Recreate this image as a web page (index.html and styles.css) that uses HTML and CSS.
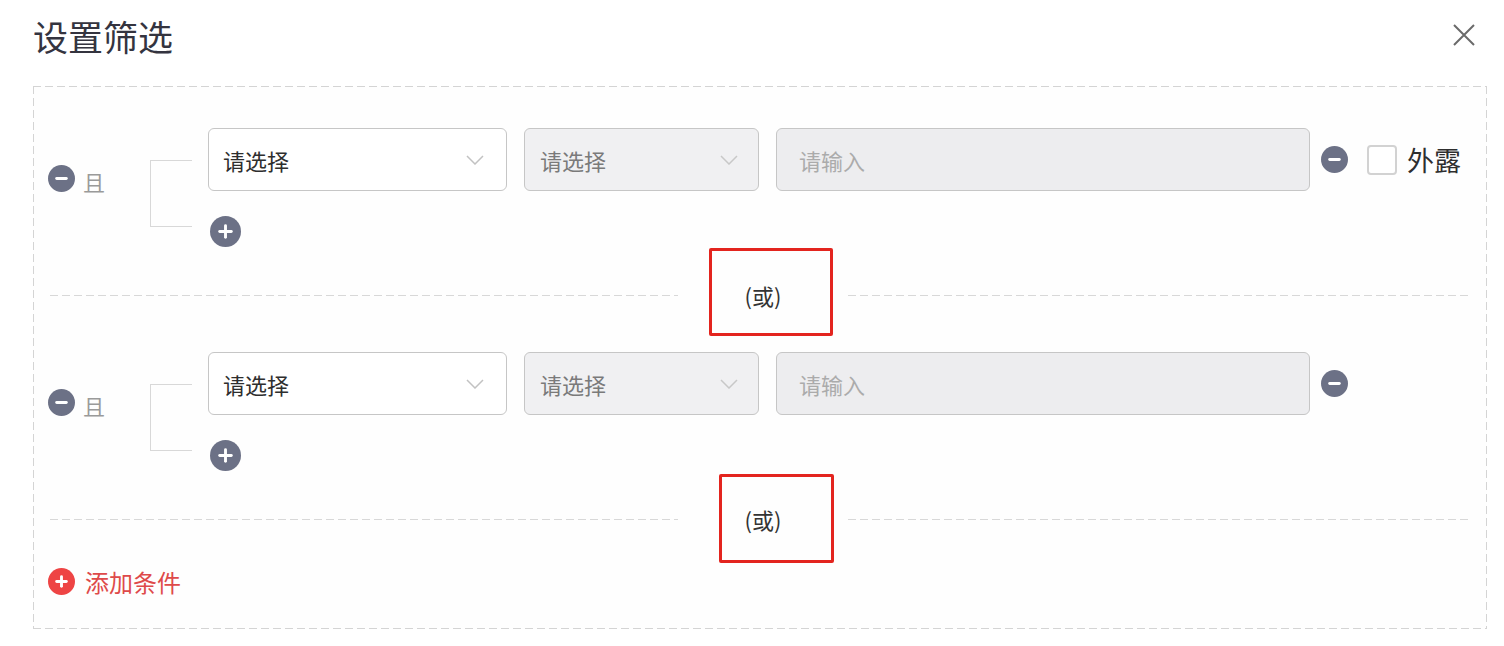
FILE: index.html
```html
<!DOCTYPE html>
<html lang="zh-CN">
<head>
    <meta charset="UTF-8">
    <meta name="viewport" content="width=device-width, initial-scale=1.0">
    <title>设置筛选</title>
    <link rel="stylesheet" href="styles.css">
</head>
<body>

    <div class="dialog-header">
        <h2 class="dialog-title">设置筛选</h2>
        <button type="button" class="close-btn" aria-label="关闭">
            <svg width="24" height="24" viewBox="0 0 24 24"><path d="M2 2 L22 22 M22 2 L2 22" stroke="#6a6a6a" stroke-width="2" fill="none"/></svg>
        </button>
    </div>

    <div class="filter-box">

        <!-- group 1 -->
        <div class="group">
            <div class="logic">
                <svg class="icon-minus" width="27" height="27" viewBox="0 0 28 28"><circle cx="14" cy="14" r="14" fill="#6c7186"/><rect x="7.5" y="12.5" width="13" height="3" rx="1.5" fill="#fff"/></svg>
                <span class="logic-text">且</span>
            </div>
            <div class="bracket"></div>
            <div class="conditions">
                <div class="cond-row">
                    <div class="select field-1"><span>请选择</span><svg width="18" height="10" viewBox="0 0 18 10"><path d="M1 1 L9 9 L17 1" stroke="#c2c2c2" stroke-width="1.5" fill="none"/></svg></div>
                    <div class="select field-2 disabled"><span>请选择</span><svg width="18" height="10" viewBox="0 0 18 10"><path d="M1 1 L9 9 L17 1" stroke="#c8c8c8" stroke-width="1.5" fill="none"/></svg></div>
                    <div class="input disabled">请输入</div>
                    <svg class="icon-minus row-minus" width="27" height="27" viewBox="0 0 28 28"><circle cx="14" cy="14" r="14" fill="#6c7186"/><rect x="7.5" y="12.5" width="13" height="3" rx="1.5" fill="#fff"/></svg>
                    <label class="expose"><span class="checkbox"></span>外露</label>
                </div>
                <svg class="icon-plus" width="31" height="31" viewBox="0 0 32 32"><circle cx="16" cy="16" r="16" fill="#6c7186"/><rect x="8.5" y="14.5" width="15" height="3" rx="1.5" fill="#fff"/><rect x="14.5" y="8.5" width="3" height="15" rx="1.5" fill="#fff"/></svg>
            </div>
        </div>

        <div class="or-divider">
            <span class="line line-left"></span>
            <span class="or-label">(或)<i class="mark mark-1"></i></span>
            <span class="line line-right"></span>
        </div>

        <!-- group 2 -->
        <div class="group">
            <div class="logic">
                <svg class="icon-minus" width="27" height="27" viewBox="0 0 28 28"><circle cx="14" cy="14" r="14" fill="#6c7186"/><rect x="7.5" y="12.5" width="13" height="3" rx="1.5" fill="#fff"/></svg>
                <span class="logic-text">且</span>
            </div>
            <div class="bracket"></div>
            <div class="conditions">
                <div class="cond-row">
                    <div class="select field-1"><span>请选择</span><svg width="18" height="10" viewBox="0 0 18 10"><path d="M1 1 L9 9 L17 1" stroke="#c2c2c2" stroke-width="1.5" fill="none"/></svg></div>
                    <div class="select field-2 disabled"><span>请选择</span><svg width="18" height="10" viewBox="0 0 18 10"><path d="M1 1 L9 9 L17 1" stroke="#c8c8c8" stroke-width="1.5" fill="none"/></svg></div>
                    <div class="input disabled">请输入</div>
                    <svg class="icon-minus row-minus" width="27" height="27" viewBox="0 0 28 28"><circle cx="14" cy="14" r="14" fill="#6c7186"/><rect x="7.5" y="12.5" width="13" height="3" rx="1.5" fill="#fff"/></svg>
                </div>
                <svg class="icon-plus" width="31" height="31" viewBox="0 0 32 32"><circle cx="16" cy="16" r="16" fill="#6c7186"/><rect x="8.5" y="14.5" width="15" height="3" rx="1.5" fill="#fff"/><rect x="14.5" y="8.5" width="3" height="15" rx="1.5" fill="#fff"/></svg>
            </div>
        </div>

        <div class="or-divider">
            <span class="line line-left"></span>
            <span class="or-label">(或)<i class="mark mark-2"></i></span>
            <span class="line line-right"></span>
        </div>

        <div class="add-cond">
            <svg width="27" height="27" viewBox="0 0 28 28"><circle cx="14" cy="14" r="14" fill="#ee4444"/><rect x="7.5" y="12.5" width="13" height="3" rx="1.5" fill="#fff"/><rect x="12.5" y="7.5" width="3" height="13" rx="1.5" fill="#fff"/></svg>
            <span>添加条件</span>
        </div>
    </div>

</body>
</html>
```

FILE: styles.css
```css
body {
    margin: 0;
    background: #fff;
    font-family: "Noto Sans CJK SC", "Noto Sans", sans-serif;
    color: #333;
}
.dialog-header {
    display: flex;
    justify-content: space-between;
    align-items: center;
    height: 70px;
    padding: 0 28px 0 33px;
}
.dialog-title {
    margin: 0;
    font-size: 35px;
    font-weight: normal;
    color: #34343f;
    line-height: 1;
}
.close-btn {
    background: none;
    border: none;
    padding: 0;
    cursor: pointer;
    display: flex;
}
/* dashed frame drawn with gradients so the dashes are longer than the browser's */
.filter-box {
    margin: 16px 17px 0 33px;
    padding: 42px 0 34px 0;
    background:
        repeating-linear-gradient(90deg, #d4d4d4 0 8px, transparent 8px 12px) left top / 100% 1px no-repeat,
        repeating-linear-gradient(90deg, #d4d4d4 0 8px, transparent 8px 12px) left bottom / 100% 1px no-repeat,
        repeating-linear-gradient(180deg, #d4d4d4 0 8px, transparent 8px 12px) left top / 1px 100% no-repeat,
        repeating-linear-gradient(180deg, #d4d4d4 0 8px, transparent 8px 12px) right top / 1px 100% no-repeat,
        #fefefe;
}
.group {
    display: flex;
    align-items: flex-start;
    padding-left: 15px;
}
.logic {
    width: 102px;
    height: 27px;
    margin-top: 37px;
    display: flex;
    align-items: center;
    gap: 8px;
}
.logic-text {
    font-size: 22px;
    color: #9a9a9a;
    line-height: 1;
    margin-top: 5px;
}
.bracket {
    width: 41px;
    height: 65px;
    margin-top: 32px;
    margin-right: 16px;
    border: 1px solid #d8d8d8;
    border-right: none;
}
.conditions {
    display: flex;
    flex-direction: column;
    align-items: flex-start;
}
.cond-row {
    display: flex;
    align-items: center;
    height: 63px;
}
.select, .input {
    box-sizing: border-box;
    height: 63px;
    border: 1px solid #c6c6c6;
    border-radius: 6px;
    display: flex;
    align-items: center;
    justify-content: space-between;
    font-size: 22px;
}
.select.field-1 {
    width: 299px;
    padding: 0 22px 0 14px;
    background: #fff;
    color: #2e2e2e;
}
.select.field-2 {
    width: 235px;
    margin-left: 17px;
    padding: 0 20px 0 15px;
    color: #7a7a7a;
}
.disabled {
    background: #f0f0f2;
}
.input {
    width: 534px;
    margin-left: 17px;
    padding-left: 22px;
    background: #ededef;
    color: #ababab;
}
.row-minus {
    margin-left: 11px;
}
.expose {
    display: flex;
    align-items: center;
    margin-left: 19px;
    font-size: 27px;
    color: #2e2e2e;
}
.checkbox {
    box-sizing: border-box;
    width: 30px;
    height: 30px;
    border: 2px solid #d2d2d2;
    border-radius: 4px;
    background: #fff;
    margin-right: 10px;
}
.icon-plus {
    margin-top: 25px;
    margin-left: 2px;
}
.or-divider {
    display: flex;
    align-items: center;
    height: 24px;
    margin: 36px 17px 45px 17px;
}
.line {
    height: 1px;
    background: repeating-linear-gradient(90deg, #d8d8d8 0 8px, transparent 8px 12px);
}
.line-left {
    width: 628px;
}
.line-right {
    flex: 1;
}
.or-label {
    position: relative;
    width: 170px;
    text-align: center;
    font-size: 22px;
    line-height: 24px;
    color: #333;
}
/* red annotation frames around the "or" labels */
.mark {
    position: absolute;
    box-sizing: border-box;
    border: 3px solid #e3241e;
    border-radius: 2px;
}
.mark-1 {
    left: 31px;
    top: -35px;
    width: 124px;
    height: 88px;
}
.mark-2 {
    left: 41px;
    top: -33px;
    width: 115px;
    height: 89px;
}
.add-cond {
    display: flex;
    align-items: center;
    gap: 10px;
    height: 27px;
    margin-top: -8px;
    padding-left: 15px;
    font-size: 24px;
    color: #de4a4a;
}
```
